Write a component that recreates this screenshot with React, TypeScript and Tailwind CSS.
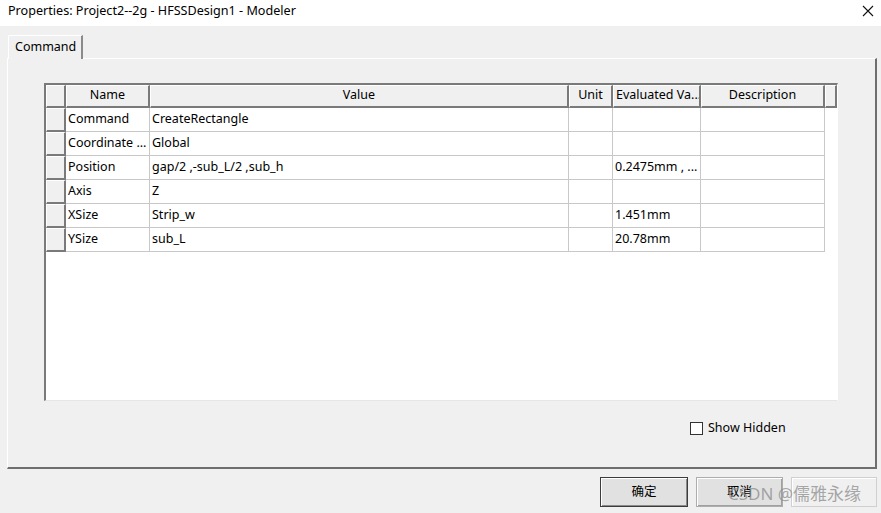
import React from 'react';

type Row = { name: string; value: string; unit: string; evaluated: string; description: string };

const rows: Row[] = [
  { name: 'Command', value: 'CreateRectangle', unit: '', evaluated: '', description: '' },
  { name: 'Coordinate ...', value: 'Global', unit: '', evaluated: '', description: '' },
  { name: 'Position', value: 'gap/2 ,-sub_L/2 ,sub_h', unit: '', evaluated: '0.2475mm , ...', description: '' },
  { name: 'Axis', value: 'Z', unit: '', evaluated: '', description: '' },
  { name: 'XSize', value: 'Strip_w', unit: '', evaluated: '1.451mm', description: '' },
  { name: 'YSize', value: 'sub_L', unit: '', evaluated: '20.78mm', description: '' },
];

const cols = 'grid grid-cols-[20px_84px_419px_44px_88px_124px_12px]';

const HeaderCell: React.FC<{ children?: React.ReactNode; align?: string }> = ({ children, align = 'justify-center' }) => (
  <div
    className={`flex items-center ${align} h-[23px] bg-[#f0f0f0] border-t border-l border-t-white border-l-white border-r-2 border-b-2 border-r-[#7a7a7a] border-b-[#7a7a7a] overflow-hidden whitespace-nowrap px-[2px]`}
  >
    <span className="-mt-[2px]">{children}</span>
  </div>
);

const Cell: React.FC<{ children?: React.ReactNode }> = ({ children }) => (
  <div className="flex items-center h-[24px] bg-white border-r border-b border-[#c8c8c8] pl-[2px] overflow-hidden whitespace-nowrap">
    {children}
  </div>
);

export default function App() {
  return (
    <div
      className="relative w-[881px] h-[513px] bg-[#f0f0f0] flex flex-col text-[12.5px] text-black"
      style={{ fontFamily: '"Noto Sans", "Noto Sans CJK SC", sans-serif' }}
    >
      {/* title bar */}
      <div className="h-[26px] bg-white flex items-center justify-between pl-[8px] pr-[6px]">
        <span className="text-[12.6px] leading-none -mt-[3px]">Properties: Project2--2g - HFSSDesign1 - Modeler</span>
        <svg width="14" height="14" viewBox="0 0 14 14" className="-mt-[5px]">
          <path d="M2 2 L12 12 M12 2 L2 12" stroke="#111" strokeWidth="1.1" />
        </svg>
      </div>

      {/* tab strip */}
      <div className="pt-[9px] pl-[8px] flex">
        <div className="relative z-10 h-[24px] w-[75px] -mb-px bg-[#f0f0f0] border-t border-l border-white border-r-2 border-r-[#8a8a8a] rounded-tl-[2px] flex items-center pl-[6px]">
          <span className="-mt-[1px]">Command</span>
        </div>
      </div>

      {/* tab panel */}
      <div className="ml-[7px] w-[870px] h-[411px] border-t border-l border-white border-r-2 border-b-2 border-r-[#6e6e6e] border-b-[#6e6e6e] flex flex-col pl-[36px] pt-[24px]">
        {/* property grid */}
        <div className="w-[794px] h-[318px] bg-white border-t-2 border-l-2 border-t-[#7a7a7a] border-l-[#7a7a7a] border-r border-b border-r-white border-b-[#e6e6e6] flex flex-col">
          <div className={cols}>
            <HeaderCell />
            <HeaderCell>Name</HeaderCell>
            <HeaderCell>Value</HeaderCell>
            <HeaderCell>Unit</HeaderCell>
            <HeaderCell align="justify-start">Evaluated Va...</HeaderCell>
            <HeaderCell>Description</HeaderCell>
            <HeaderCell />
          </div>
          {rows.map((r) => (
            <div key={r.name} className={cols}>
              <div className="h-[24px] bg-[#f0f0f0] border-t border-l border-white border-r-2 border-b-2 border-r-[#7a7a7a] border-b-[#7a7a7a]" />
              <Cell>{r.name}</Cell>
              <Cell>{r.value}</Cell>
              <Cell>{r.unit}</Cell>
              <Cell>{r.evaluated}</Cell>
              <Cell>{r.description}</Cell>
              <div className="h-[24px] bg-white" />
            </div>
          ))}
        </div>

        {/* show hidden */}
        <div className="flex items-center mt-[18px] ml-[646px] gap-[5px]">
          <div className="w-[13px] h-[13px] bg-white border border-[#333]" />
          <span>Show Hidden</span>
        </div>
      </div>

      {/* buttons */}
      <div className="flex gap-[8px] pl-[600px] pt-[8px]">
        <button className="w-[88px] h-[30px] bg-[#e1e1e1] border border-[#3c3c3c] shadow-[inset_1px_1px_0_#fff,inset_-1px_-1px_0_#8a8a8a] text-[12.5px]">
          确定
        </button>
        <button className="w-[87px] h-[30px] bg-[#e1e1e1] border border-[#adadad] shadow-[inset_1px_1px_0_#fff,inset_-1px_-1px_0_#a0a0a0] text-[12.5px]">
          取消
        </button>
        <button className="w-[86px] h-[30px] bg-[#f0f0f0] border border-[#d0d0d0] shadow-[inset_1px_1px_0_#fff] text-[12.5px]" />
      </div>

      {/* watermark */}
      <div className="absolute left-[728px] top-[481px] text-[17px] text-[#8c8c8c]/75 whitespace-nowrap pointer-events-none">
        CSDN @儒雅永缘
      </div>
    </div>
  );
}
